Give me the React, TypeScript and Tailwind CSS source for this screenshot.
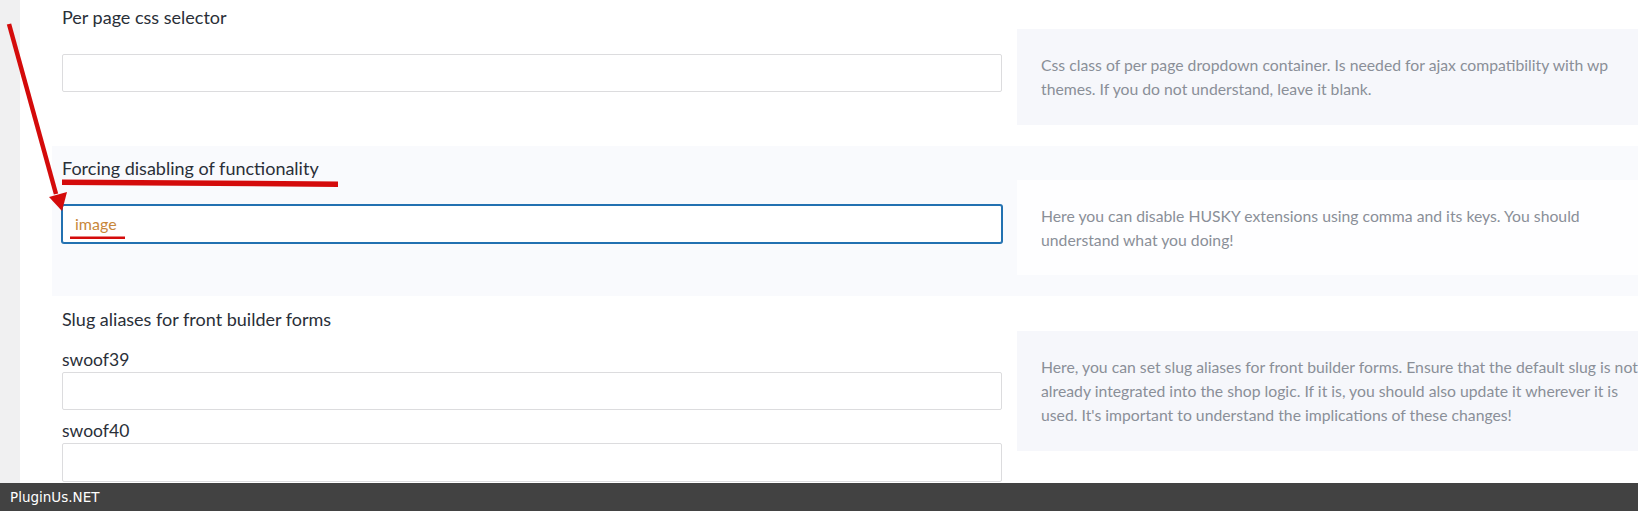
import React from "react";

const labelFont = { fontFamily: "Lato, 'Open Sans', sans-serif" };

function DescBox({ lines, bg }: { lines: string[]; bg: string }) {
  return (
    <div className={`w-[680px] shrink-0 px-6 py-6 ${bg}`}>
      <p className="text-[15.75px] leading-[24px] text-[#8a8f98] whitespace-nowrap">
        {lines.map((l, i) => (
          <React.Fragment key={i}>
            {l}
            {i < lines.length - 1 && <br />}
          </React.Fragment>
        ))}
      </p>
    </div>
  );
}

export default function App() {
  return (
    <div
      className="relative w-[1638px] h-[511px] overflow-hidden flex flex-col bg-white"
      style={labelFont}
    >
      <div className="flex flex-1 min-h-0 overflow-hidden">
        <div className="w-[20px] shrink-0 bg-[#f0f0f1]" />
        <div className="flex-1 pl-[32px] bg-white">
          {/* Row 1 */}
          <div className="pl-[10px] pt-[5px] pb-[21px]">
            <div className="h-[24px] text-[18px] leading-[24px] text-[#2a2f38]">
              Per page css selector
            </div>
            <div className="flex gap-[15px]">
              <div className="w-[940px] shrink-0 pt-[25px]">
                <input
                  className="block w-full h-[38px] border border-[#dcdcde] rounded-[2px] bg-white outline-none"
                  defaultValue=""
                />
              </div>
              <div className="h-[96px] flex">
                <DescBox
                  bg="bg-[#f6f7fb]"
                  lines={[
                    "Css class of per page dropdown container. Is needed for ajax compatibility with wp",
                    "themes. If you do not understand, leave it blank.",
                  ]}
                />
              </div>
            </div>
          </div>

          {/* Row 2 */}
          <div className="pl-[10px] pt-[10px] pb-[21px] bg-[#f9fafd]">
            <div className="h-[24px] text-[18px] leading-[24px] text-[#2a2f38]">
              Forcing disabling of functionality
            </div>
            <div className="flex gap-[15px]">
              <div className="w-[940px] shrink-0 pt-[25px]">
                <div className="flex items-center w-full h-[38px] border border-[#2271b1] shadow-[0_0_0_1px_#2271b1] rounded-[2px] bg-white pl-[12px] text-[16px] text-[#c8873a]">
                  image
                </div>
              </div>
              <div className="h-[95px] flex">
                <DescBox
                  bg="bg-[#fefeff]"
                  lines={[
                    "Here you can disable HUSKY extensions using comma and its keys. You should",
                    "understand what you doing!",
                  ]}
                />
              </div>
            </div>
          </div>

          {/* Row 3 */}
          <div className="pl-[10px] pt-[11px] pb-[21px]">
            <div className="h-[24px] text-[18px] leading-[24px] text-[#2a2f38]">
              Slug aliases for front builder forms
            </div>
            <div className="flex gap-[15px]">
              <div className="w-[940px] shrink-0 pt-[17px]">
                <div className="h-[24px] text-[17.5px] leading-[24px] text-[#2a2f38]">
                  swoof39
                </div>
                <input
                  className="block w-full h-[38px] border border-[#dcdcde] rounded-[2px] bg-white outline-none"
                  defaultValue=""
                />
                <div className="h-[24px] mt-[9px] text-[17.5px] leading-[24px] text-[#2a2f38]">
                  swoof40
                </div>
                <input
                  className="block w-full h-[39px] border border-[#dcdcde] rounded-[2px] bg-white outline-none"
                  defaultValue=""
                />
              </div>
              <div className="h-[120px] flex">
                <DescBox
                  bg="bg-[#f6f7fb]"
                  lines={[
                    "Here, you can set slug aliases for front builder forms. Ensure that the default slug is not",
                    "already integrated into the shop logic. If it is, you should also update it wherever it is",
                    "used. It's important to understand the implications of these changes!",
                  ]}
                />
              </div>
            </div>
          </div>
        </div>
      </div>

      {/* Footer */}
      <div
        className="h-[28px] shrink-0 bg-[#424242] flex items-center pl-[10px] text-[13.5px] text-white"
        style={{ fontFamily: "'DejaVu Sans', sans-serif" }}
      >
        PluginUs.NET
      </div>

      {/* Annotation overlay */}
      <svg
        className="absolute left-0 top-0 pointer-events-none"
        width="1638"
        height="511"
        viewBox="0 0 1638 511"
      >
        <line x1="9" y1="24" x2="56" y2="194" stroke="#d40b0b" strokeWidth="4.5" />
        <polygon points="62,211 49,197 67,192" fill="#d40b0b" />
        <line x1="62" y1="182.2" x2="338" y2="184.2" stroke="#d40b0b" strokeWidth="5.5" />
        <line x1="70" y1="237.8" x2="125" y2="237.8" stroke="#d40b0b" strokeWidth="2.5" />
      </svg>
    </div>
  );
}
